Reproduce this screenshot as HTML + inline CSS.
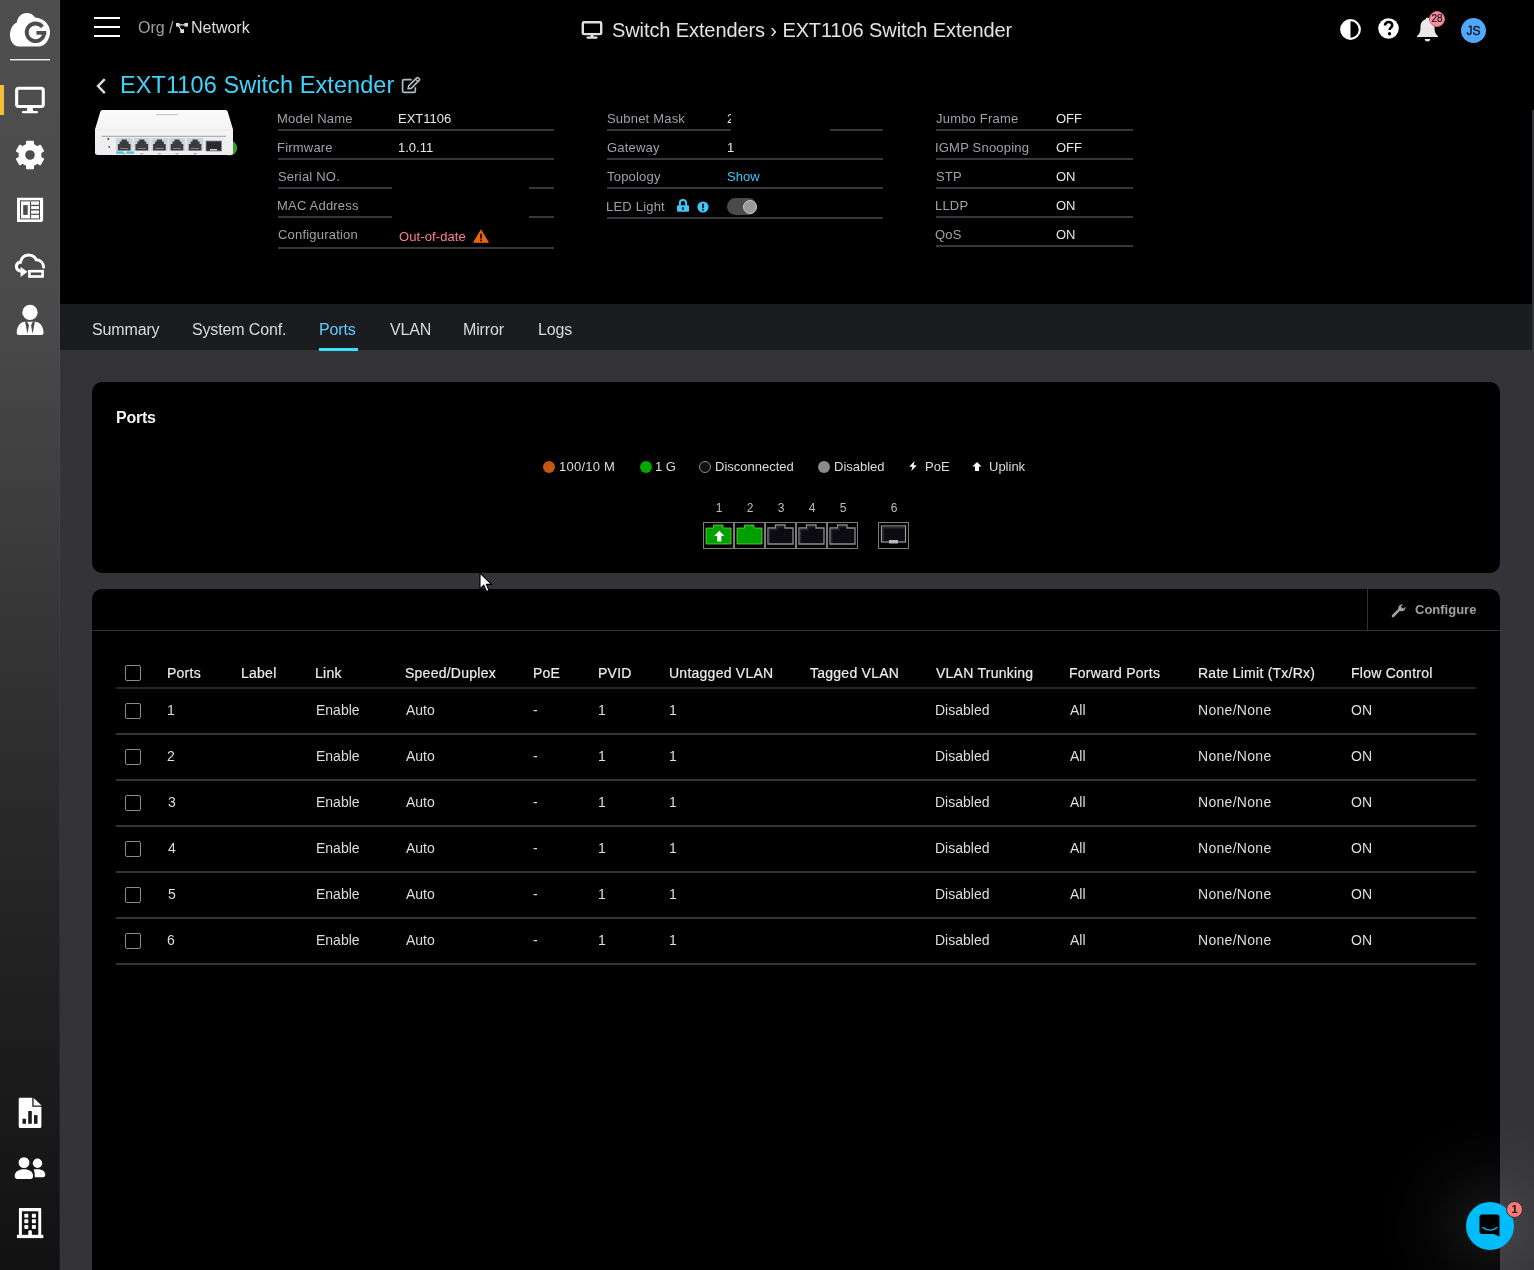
<!DOCTYPE html>
<html><head><meta charset="utf-8"><title>EXT1106 Switch Extender</title>
<style>
html,body{margin:0;padding:0;background:#000;}
body{width:1534px;height:1270px;overflow:hidden;position:relative;font-family:"Liberation Sans",sans-serif;}
.r{position:absolute;display:block;}
.t{position:absolute;line-height:1;white-space:nowrap;font-family:"Liberation Sans",sans-serif;will-change:transform;}
</style></head><body>
<div class="r" style="left:0px;top:0px;width:1534px;height:1270px;background:#000;"></div>
<div class="r" style="left:60px;top:350px;width:1474px;height:920px;background:#343438;"></div>
<div class="r" style="left:1532px;top:110px;width:2px;height:240px;background:#343438;"></div>
<div class="r" style="left:60px;top:304px;width:1472px;height:46px;background:#1b1c20;"></div>
<div class="r" style="left:0px;top:0px;width:60px;height:1270px;background:linear-gradient(180deg,#4e4e4e 0px,#4b4b4b 300px,#2a2a2a 800px,#111 1270px);"></div>
<div class="r" style="left:59px;top:0px;width:1px;height:1270px;background:rgba(255,255,255,0.04);"></div>
<svg class="r" style="left:5px;top:8px;" width="50" height="44" viewBox="0 0 50 44"><path d="M13.9 38.5 C8.5 38.5 5 33 5 27 C5 21 8 16 11.8 14.6 C12.5 8.8 16.5 4.9 21.5 4.9 C25.5 4.9 28.5 6.8 30.1 9.4 C38.5 10.2 45 16 45 24 C45 32 39.5 38.4 34.6 38.4 Z" fill="#fff"/><path d="M37.43 18.88 A8.8 8.8 0 1 0 39.29 24.76" fill="none" stroke="#4d4d4d" stroke-width="3.8"/><rect x="31.4" y="23" width="9.9" height="3.7" fill="#4d4d4d"/></svg>
<div class="r" style="left:10px;top:59px;width:40px;height:1px;background:#eee;"></div>
<div class="r" style="left:10px;top:60px;width:40px;height:1px;background:rgba(230,230,230,0.45);"></div>
<div class="r" style="left:0px;top:85px;width:4px;height:30px;background:#f5bf3a;"></div>
<svg class="r" style="left:14px;top:86px;" width="32" height="28" viewBox="0 0 32 28"><rect x="2.65" y="2.25" width="26.6" height="18.3" rx="2" fill="none" stroke="#fff" stroke-width="3.1"/><path d="M13.3 21.5 H18.7 L19.2 25.5 H12.8 Z" fill="#fff"/><rect x="7.9" y="24.9" width="16.1" height="2.4" rx="1.2" fill="#fff"/></svg>
<svg class="r" style="left:15px;top:139.85px;" width="30" height="30" viewBox="0 0 30 30"><g transform="translate(15,15)" fill="#fff"><rect x="-3.95" y="-14.3" width="7.9" height="6" rx="0.8" transform="rotate(0)"/><rect x="-3.95" y="-14.3" width="7.9" height="6" rx="0.8" transform="rotate(60)"/><rect x="-3.95" y="-14.3" width="7.9" height="6" rx="0.8" transform="rotate(120)"/><rect x="-3.95" y="-14.3" width="7.9" height="6" rx="0.8" transform="rotate(180)"/><rect x="-3.95" y="-14.3" width="7.9" height="6" rx="0.8" transform="rotate(240)"/><rect x="-3.95" y="-14.3" width="7.9" height="6" rx="0.8" transform="rotate(300)"/><circle r="11.4"/></g><circle cx="15" cy="15" r="4.8" fill="#4c4c4c"/></svg>
<svg class="r" style="left:14px;top:194px;" width="32" height="32" viewBox="0 0 32 32"><path d="M3 3.8 H29.1 V26.6 L27.6 28.1 H3 Z" fill="#fff"/><rect x="6" y="6.3" width="20" height="19.1" fill="#4b4b4b"/><rect x="7" y="7.4" width="18" height="17" fill="#fff"/><rect x="9.2" y="11.1" width="4.5" height="9.8" fill="#4b4b4b"/><rect x="16" y="7.4" width="1.1" height="17" fill="#4b4b4b"/><rect x="17.1" y="10.8" width="7.9" height="1.3" fill="#4b4b4b"/><rect x="17.1" y="15.1" width="7.9" height="1.4" fill="#4b4b4b"/><rect x="17.1" y="19.7" width="7.9" height="1.2" fill="#4b4b4b"/></svg>
<svg class="r" style="left:14px;top:252px;" width="32" height="28" viewBox="0 0 32 28"><path d="M7.2 19.3 C4.2 18.8 2.4 16.8 2.4 14.6 C2.4 12.3 4.1 10.6 6.4 10.3 C7.3 5.9 10.6 2.9 14.6 2.9 C18.3 2.9 21 4.9 22.3 7.8 C26.3 8.1 29.5 11 29.6 15.3" fill="none" stroke="#fff" stroke-width="3" stroke-linecap="round"/><path d="M6.6 15.1 L13.6 19.8 L6.6 25 Z" fill="#fff"/><rect x="15.4" y="19.2" width="13.2" height="5.3" fill="none" stroke="#fff" stroke-width="2.6"/></svg>
<svg class="r" style="left:12px;top:300px;" width="36" height="40" viewBox="0 0 36 40"><circle cx="18" cy="12.4" r="7.7" fill="#fff"/><path d="M4.7 33 C4.7 26 8.5 21.7 12.8 21.7 H23.2 C27.5 21.7 31.5 26 31.5 33 C31.5 34.2 30.7 35 29.5 35 H6.7 C5.5 35 4.7 34.2 4.7 33 Z" fill="#fff"/><path d="M13.1 21.4 H15.1 L17 25.5 L15.4 33.7 Z" fill="#4a4a4a"/><path d="M20.9 21.4 H22.9 L20.6 33.7 L19 25.5 Z" fill="#4a4a4a"/></svg>
<svg class="r" style="left:14px;top:1092px;" width="32" height="40" viewBox="0 0 32 40"><path d="M4.7 7.2 C4.7 6.3 5.3 5.7 6.2 5.7 H18.3 V14.8 H27.4 V34.4 C27.4 35.3 26.8 35.9 25.9 35.9 H6.2 C5.3 35.9 4.7 35.3 4.7 34.4 Z" fill="#fff"/><path d="M19.6 5.9 L27.6 13.6 H19.6 Z" fill="#fff"/><rect x="8.5" y="26.8" width="3.5" height="5" fill="#1c1c1c"/><rect x="14.2" y="19" width="3.6" height="12.8" fill="#1c1c1c"/><rect x="20" y="23.1" width="3.5" height="8.7" fill="#1c1c1c"/></svg>
<svg class="r" style="left:12px;top:1150px;" width="36" height="36" viewBox="0 0 36 36"><circle cx="12" cy="12.6" r="5.4" fill="#fff"/><circle cx="25.5" cy="13.3" r="4.7" fill="#fff"/><path d="M2.8 25.5 C2.8 21.5 7 19.2 12 19.2 C17 19.2 21 21.5 21 25.5 V26.5 C21 28 20 28.9 18.5 28.9 H5.3 C3.8 28.9 2.8 28 2.8 26.5 Z" fill="#fff"/><path d="M21.6 19.6 C22.8 19.3 24 19.2 25.5 19.2 C30 19.2 33.3 21.3 33.3 24.8 C33.3 26.3 32.5 27.2 31 27.2 H22.8 C22.8 24 22.5 21.3 21.6 19.6 Z" fill="#fff"/></svg>
<svg class="r" style="left:12px;top:1204px;" width="36" height="38" viewBox="0 0 36 38"><path d="M6.9 32 V5 C6.9 4.3 7.3 3.9 8 3.9 H28.1 C28.8 3.9 29.2 4.3 29.2 5 V32 H26.3 V7.2 H9.9 V32 Z" fill="#fff"/><rect x="4.9" y="30.8" width="26.4" height="3.3" fill="#fff"/><rect x="12.3" y="9.7" width="4" height="4" rx="0.8" fill="#fff"/><rect x="12.3" y="15.2" width="4" height="4" rx="0.8" fill="#fff"/><rect x="12.3" y="20.9" width="4" height="4" rx="0.8" fill="#fff"/><rect x="19.9" y="9.7" width="4" height="4" rx="0.8" fill="#fff"/><rect x="19.9" y="15.2" width="4" height="4" rx="0.8" fill="#fff"/><rect x="19.9" y="20.9" width="4" height="4" rx="0.8" fill="#fff"/><path d="M16.3 31 V27.5 C16.3 26.8 17 26.3 18.1 26.3 C19.2 26.3 19.9 26.8 19.9 27.5 V31 Z" fill="#fff"/></svg>
<div class="r" style="left:94px;top:17px;width:26px;height:2px;background:#fff;"></div>
<div class="r" style="left:94px;top:26px;width:26px;height:2px;background:#fff;"></div>
<div class="r" style="left:94px;top:35px;width:26px;height:2px;background:#fff;"></div>
<div class="t" style="left:138.00px;top:20px;font-size:16px;color:#a0a0a0;font-weight:400;">Org /</div>
<svg class="r" style="left:175px;top:22px;" width="14" height="12" viewBox="0 0 14 12"><path d="M3 2.8 L11.5 2.8 M3 3 L7 9.5" stroke="#ddd" stroke-width="1.3"/><rect x="1" y="1" width="3.6" height="3.6" fill="#ddd"/><rect x="9.4" y="1" width="3.6" height="3.6" fill="#ddd"/><rect x="5.2" y="7.2" width="3.8" height="3.8" fill="#ddd"/></svg>
<div class="t" style="left:191.00px;top:20px;font-size:16px;color:#dedede;font-weight:400;">Network</div>
<svg class="r" style="left:581px;top:19px;" width="22" height="21" viewBox="0 0 22 21"><rect x="1.8" y="3.3" width="18.4" height="11.8" rx="1.2" fill="none" stroke="#e0e0e0" stroke-width="2.4"/><rect x="9.5" y="15" width="3" height="3" fill="#e0e0e0"/><rect x="5.5" y="17.5" width="11" height="2.2" rx="1" fill="#e0e0e0"/></svg>
<div class="t" style="left:612.00px;top:20px;font-size:20px;color:#e3e3e3;font-weight:400;letter-spacing:-0.1px;">Switch Extenders › EXT1106 Switch Extender</div>
<svg class="r" style="left:1339px;top:18px;" width="23" height="23" viewBox="0 0 23 23"><circle cx="11.5" cy="11.5" r="9.3" fill="none" stroke="#fff" stroke-width="2.2"/><path d="M11.5 2.2 A9.3 9.3 0 0 0 11.5 20.8 Z" fill="#fff"/></svg>
<svg class="r" style="left:1377px;top:17px;" width="23" height="23" viewBox="0 0 23 23"><circle cx="11.5" cy="11.5" r="10.3" fill="#fff"/><path d="M8 8.6 C8 6.2 9.6 5 11.6 5 C13.8 5 15.2 6.3 15.2 8.2 C15.2 10.4 12.6 10.8 12.6 13" fill="none" stroke="#000" stroke-width="2.6"/><circle cx="12.5" cy="16.8" r="1.7" fill="#000"/></svg>
<svg class="r" style="left:1415px;top:16px;" width="25" height="27" viewBox="0 0 25 27"><path d="M12.5 1.5 C13.6 1.5 14.2 2.3 14.2 3.2 C18 4.2 19.5 7.5 19.5 11 C19.5 16 20.5 18 23 20 V21 H2 V20 C4.5 18 5.5 16 5.5 11 C5.5 7.5 7 4.2 10.8 3.2 C10.8 2.3 11.4 1.5 12.5 1.5 Z" fill="#e8e8e8"/><path d="M9.6 23 H15.4 C15 24.7 14 25.5 12.5 25.5 C11 25.5 10 24.7 9.6 23 Z" fill="#e8e8e8"/></svg>
<div class="r" style="left:1429px;top:10.5px;width:14px;height:14px;border:1px solid #d8606f;border-radius:50%;background:#f490a0;color:#111;font-size:10px;line-height:14px;text-align:center;will-change:transform;-webkit-text-stroke:0.2px #111;font-family:'Liberation Sans',sans-serif">28</div>
<div class="r" style="left:1461px;top:18px;width:25px;height:25px;border-radius:50%;background:#4fa8fb;color:#111;font-size:12px;font-weight:400;line-height:26px;text-align:center;will-change:transform;-webkit-text-stroke:0.3px #111;font-family:'Liberation Sans',sans-serif">JS</div>
<svg class="r" style="left:94px;top:77px;" width="14" height="18" viewBox="0 0 14 18"><path d="M10.8 2.1 L4 9.1 L10.8 16.1" fill="none" stroke="#dcdcdc" stroke-width="2.4"/></svg>
<div class="t" style="left:120.00px;top:74px;font-size:23.5px;color:#3fd3fc;font-weight:400;letter-spacing:0.08px;">EXT1106 Switch Extender</div>
<svg class="r" style="left:401px;top:76px;" width="21" height="19" viewBox="0 0 21 19"><path d="M10.6 3.6 H3.1 C2.2 3.6 1.6 4.2 1.6 5.1 V14.9 C1.6 15.8 2.2 16.4 3.1 16.4 H12.8 C13.7 16.4 14.3 15.8 14.3 14.9 V11.2" fill="none" stroke="#b2bac2" stroke-width="1.7"/><path d="M7.1 12.8 L7.7 9.9 L15.7 1.9 C16.2 1.4 16.9 1.4 17.4 1.9 L18.2 2.7 C18.7 3.2 18.7 3.9 18.2 4.4 L10.2 12.4 Z" fill="none" stroke="#b2bac2" stroke-width="1.6" stroke-linejoin="round"/><path d="M14.5 3.2 L16.9 5.6" stroke="#b2bac2" stroke-width="1.4"/></svg>
<svg class="r" style="left:90px;top:105px;" width="150" height="55" viewBox="0 0 150 55"><defs><linearGradient id="dg" x1="0" y1="0" x2="0" y2="1"><stop offset="0" stop-color="#fafafa"/><stop offset="1" stop-color="#ececec"/></linearGradient></defs><circle cx="139.6" cy="43" r="7.6" fill="#3b9e2a"/><path d="M13.5 5 H135 C136.5 5 137.3 5.6 137.8 7 L143 24.5 V47.5 C143 49.3 142 50 140.5 50 H7.5 C6 50 5 49.3 5 47.5 V24.5 L10.2 7 C10.7 5.6 11.5 5 13.5 5 Z" fill="url(#dg)"/><path d="M5 25 H143" stroke="#e2e2e2" stroke-width="0.6"/><rect x="11.7" y="30.8" width="124.2" height="19" fill="#eceef2"/><rect x="11.7" y="30.8" width="124.2" height="0.9" fill="#9a9a9a"/><rect x="26.0" y="33" width="16.4" height="13" fill="#cfd3de"/><path d="M27.9 45.5 V39 H29.7 V36.5 H31.6 V34.5 H36.8 V36.5 H38.7 V39 H40.5 V45.5 Z" fill="#3b3c42"/><rect x="30.2" y="43" width="8" height="1" fill="#b0a060" opacity="0.7"/><rect x="32.7" y="48" width="3" height="1.2" fill="#aaa"/><rect x="43.6" y="33" width="16.4" height="13" fill="#cfd3de"/><path d="M45.5 45.5 V39 H47.3 V36.5 H49.2 V34.5 H54.4 V36.5 H56.3 V39 H58.1 V45.5 Z" fill="#3b3c42"/><rect x="47.8" y="43" width="8" height="1" fill="#b0a060" opacity="0.7"/><rect x="50.3" y="48" width="3" height="1.2" fill="#aaa"/><rect x="61.2" y="33" width="16.4" height="13" fill="#cfd3de"/><path d="M63.1 45.5 V39 H64.9 V36.5 H66.8 V34.5 H72.0 V36.5 H73.9 V39 H75.7 V45.5 Z" fill="#3b3c42"/><rect x="65.4" y="43" width="8" height="1" fill="#b0a060" opacity="0.7"/><rect x="67.9" y="48" width="3" height="1.2" fill="#aaa"/><rect x="78.8" y="33" width="16.4" height="13" fill="#cfd3de"/><path d="M80.7 45.5 V39 H82.5 V36.5 H84.4 V34.5 H89.6 V36.5 H91.5 V39 H93.3 V45.5 Z" fill="#3b3c42"/><rect x="83.0" y="43" width="8" height="1" fill="#b0a060" opacity="0.7"/><rect x="85.5" y="48" width="3" height="1.2" fill="#aaa"/><rect x="96.9" y="33" width="16.4" height="13" fill="#cfd3de"/><path d="M98.8 45.5 V39 H100.6 V36.5 H102.5 V34.5 H107.7 V36.5 H109.6 V39 H111.4 V45.5 Z" fill="#3b3c42"/><rect x="101.1" y="43" width="8" height="1" fill="#b0a060" opacity="0.7"/><rect x="103.6" y="48" width="3" height="1.2" fill="#aaa"/><rect x="26.2" y="46.4" width="7.5" height="2.4" fill="#4cc4de"/><rect x="36.5" y="46.4" width="7.5" height="2.4" fill="#4cc4de"/><rect x="116" y="36" width="15.5" height="10" fill="#2a2b2e" stroke="#888" stroke-width="0.8"/><rect x="120" y="44" width="7" height="1.5" fill="#ccc"/><circle cx="18.3" cy="34" r="1.1" fill="#555"/><circle cx="19.2" cy="42" r="0.9" fill="#555"/><rect x="66" y="9" width="22" height="1.2" fill="#c8c8c8"/></svg>
<div class="t" style="left:277.00px;top:112px;font-size:13px;color:#a0a0a8;font-weight:400;letter-spacing:0.2px;">Model Name</div>
<div class="t" style="left:398.00px;top:112px;font-size:13px;color:#e8e8e8;font-weight:400;">EXT1106</div>
<div class="t" style="left:277.00px;top:141px;font-size:13px;color:#a0a0a8;font-weight:400;letter-spacing:0.2px;">Firmware</div>
<div class="t" style="left:398.00px;top:141px;font-size:13px;color:#e8e8e8;font-weight:400;">1.0.11</div>
<div class="t" style="left:278.00px;top:170px;font-size:13px;color:#a0a0a8;font-weight:400;letter-spacing:0.2px;">Serial NO.</div>
<div class="t" style="left:277.00px;top:199px;font-size:13px;color:#a0a0a8;font-weight:400;letter-spacing:0.2px;">MAC Address</div>
<div class="t" style="left:278.00px;top:228px;font-size:13px;color:#a0a0a8;font-weight:400;letter-spacing:0.2px;">Configuration</div>
<div class="t" style="left:399.00px;top:230px;font-size:13px;color:#ff7d92;font-weight:400;letter-spacing:0.1px;">Out-of-date</div>
<svg class="r" style="left:473px;top:229px;" width="16" height="14" viewBox="0 0 16 14"><path d="M8 1.2 L15.2 13.2 H0.8 Z" fill="#e8650e" stroke="#e8650e" stroke-width="1.2" stroke-linejoin="round"/><rect x="7.15" y="4.8" width="1.7" height="4.9" fill="#000"/><rect x="7.15" y="10.6" width="1.7" height="1.7" fill="#000"/></svg>
<div class="r" style="left:278px;top:129px;width:276px;height:2px;background:#37363c;"></div>
<div class="r" style="left:278px;top:158px;width:276px;height:2px;background:#37363c;"></div>
<div class="r" style="left:278px;top:187px;width:114px;height:2px;background:#37363c;"></div>
<div class="r" style="left:529px;top:187px;width:25px;height:2px;background:#37363c;"></div>
<div class="r" style="left:278px;top:216px;width:114px;height:2px;background:#37363c;"></div>
<div class="r" style="left:529px;top:216px;width:25px;height:2px;background:#37363c;"></div>
<div class="r" style="left:278px;top:247px;width:276px;height:2px;background:#37363c;"></div>
<div class="t" style="left:607.00px;top:112px;font-size:13px;color:#a0a0a8;font-weight:400;letter-spacing:0.2px;">Subnet Mask</div>
<div class="t" style="left:607.00px;top:141px;font-size:13px;color:#a0a0a8;font-weight:400;letter-spacing:0.2px;">Gateway</div>
<div class="t" style="left:607.00px;top:170px;font-size:13px;color:#a0a0a8;font-weight:400;letter-spacing:0.2px;">Topology</div>
<div class="t" style="left:606.00px;top:200px;font-size:13px;color:#a0a0a8;font-weight:400;letter-spacing:0.2px;">LED Light</div>
<div class="r" style="left:727px;top:105px;width:4px;height:22px;overflow:hidden"><div class="t" style="left:0;top:7.00px;font-size:13px;color:#e8e8e8">2</div></div>
<div class="t" style="left:727.00px;top:141px;font-size:13px;color:#e8e8e8;font-weight:400;">1</div>
<div class="t" style="left:727.00px;top:170px;font-size:13px;color:#3fc4fb;font-weight:400;">Show</div>
<svg class="r" style="left:676px;top:198px;" width="14" height="15" viewBox="0 0 14 15"><rect x="1" y="7.3" width="12" height="6.5" rx="1" fill="#3fc6fb"/><path d="M3.9 7.8 V5 C3.9 3 5.2 1.9 7 1.9 C8.8 1.9 10.1 3 10.1 5 V7.8" fill="none" stroke="#3fc6fb" stroke-width="2"/><rect x="6.25" y="9.2" width="1.5" height="2.8" fill="#000"/></svg>
<svg class="r" style="left:696.5px;top:200.7px;" width="12" height="12" viewBox="0 0 12 12"><circle cx="6" cy="6" r="5.6" fill="#3fc6fb"/><rect x="5.2" y="2.6" width="1.6" height="4.6" fill="#000"/><rect x="5.2" y="8" width="1.6" height="1.6" fill="#000"/></svg>
<div class="r" style="left:727px;top:198px;width:30px;height:17px;border-radius:9px;background:#4a4a4a"></div>
<div class="r" style="left:743px;top:199.5px;width:14px;height:14px;border-radius:50%;background:#9a9a9a;border:1px solid #c8c8c8;box-sizing:border-box"></div>
<div class="r" style="left:607px;top:129px;width:124px;height:2px;background:#37363c;"></div>
<div class="r" style="left:830px;top:129px;width:53px;height:2px;background:#37363c;"></div>
<div class="r" style="left:607px;top:158px;width:276px;height:2px;background:#37363c;"></div>
<div class="r" style="left:607px;top:187px;width:276px;height:2px;background:#37363c;"></div>
<div class="r" style="left:607px;top:217px;width:276px;height:2px;background:#37363c;"></div>
<div class="t" style="left:936.00px;top:112px;font-size:13px;color:#a0a0a8;font-weight:400;letter-spacing:0.2px;">Jumbo Frame</div>
<div class="t" style="left:1056.00px;top:112px;font-size:13px;color:#e8e8e8;font-weight:400;">OFF</div>
<div class="t" style="left:935.00px;top:141px;font-size:13px;color:#a0a0a8;font-weight:400;letter-spacing:0.2px;">IGMP Snooping</div>
<div class="t" style="left:1056.00px;top:141px;font-size:13px;color:#e8e8e8;font-weight:400;">OFF</div>
<div class="t" style="left:936.00px;top:170px;font-size:13px;color:#a0a0a8;font-weight:400;letter-spacing:0.2px;">STP</div>
<div class="t" style="left:1056.00px;top:170px;font-size:13px;color:#e8e8e8;font-weight:400;">ON</div>
<div class="t" style="left:935.00px;top:199px;font-size:13px;color:#a0a0a8;font-weight:400;letter-spacing:0.2px;">LLDP</div>
<div class="t" style="left:1056.00px;top:199px;font-size:13px;color:#e8e8e8;font-weight:400;">ON</div>
<div class="t" style="left:935.00px;top:228px;font-size:13px;color:#a0a0a8;font-weight:400;letter-spacing:0.2px;">QoS</div>
<div class="t" style="left:1056.00px;top:228px;font-size:13px;color:#e8e8e8;font-weight:400;">ON</div>
<div class="r" style="left:936px;top:129px;width:197px;height:2px;background:#37363c;"></div>
<div class="r" style="left:936px;top:158px;width:197px;height:2px;background:#37363c;"></div>
<div class="r" style="left:936px;top:187px;width:197px;height:2px;background:#37363c;"></div>
<div class="r" style="left:936px;top:216px;width:197px;height:2px;background:#37363c;"></div>
<div class="r" style="left:936px;top:245px;width:197px;height:2px;background:#37363c;"></div>
<div class="t" style="left:92.00px;top:322px;font-size:16px;color:#dadada;font-weight:400;letter-spacing:-0.15px;">Summary</div>
<div class="t" style="left:192.00px;top:322px;font-size:16px;color:#dadada;font-weight:400;letter-spacing:-0.15px;">System Conf.</div>
<div class="t" style="left:319.00px;top:322px;font-size:16px;color:#5ccfff;font-weight:400;letter-spacing:-0.15px;">Ports</div>
<div class="t" style="left:390.00px;top:322px;font-size:16px;color:#dadada;font-weight:400;letter-spacing:-0.15px;">VLAN</div>
<div class="t" style="left:463.00px;top:322px;font-size:16px;color:#dadada;font-weight:400;letter-spacing:-0.15px;">Mirror</div>
<div class="t" style="left:538.00px;top:322px;font-size:16px;color:#dadada;font-weight:400;letter-spacing:-0.15px;">Logs</div>
<div class="r" style="left:319px;top:348px;width:39px;height:3px;background:#3ae0ff;"></div>
<div class="r" style="left:92px;top:382px;width:1408px;height:191px;background:#000;border-radius:10px;"></div>
<div class="t" style="left:116.00px;top:410px;font-size:16px;color:#f2f2f2;font-weight:700;letter-spacing:-0.25px;">Ports</div>
<div class="r" style="left:543.0px;top:461.0px;width:12px;height:12px;border-radius:50%;background:#c2570f;box-sizing:border-box;"></div>
<div class="t" style="left:559.00px;top:460px;font-size:13px;color:#dcdcdc;font-weight:400;letter-spacing:0.25px;">100/10 M</div>
<div class="r" style="left:640.0px;top:461.0px;width:12px;height:12px;border-radius:50%;background:#00a800;box-sizing:border-box;"></div>
<div class="t" style="left:655.00px;top:460px;font-size:13px;color:#dcdcdc;font-weight:400;">1 G</div>
<div class="r" style="left:699.0px;top:461.0px;width:12px;height:12px;border-radius:50%;background:#111;box-sizing:border-box;border:1px solid #8a8a8a;"></div>
<div class="t" style="left:715.00px;top:460px;font-size:13px;color:#dcdcdc;font-weight:400;">Disconnected</div>
<div class="r" style="left:818.0px;top:461.0px;width:12px;height:12px;border-radius:50%;background:#8a8a8a;box-sizing:border-box;"></div>
<div class="t" style="left:834.00px;top:460px;font-size:13px;color:#dcdcdc;font-weight:400;">Disabled</div>
<svg class="r" style="left:908px;top:460px;" width="10" height="12" viewBox="0 0 10 12"><path d="M6.6 1 L1.2 6.8 H4.4 L3.3 11 L8.8 5.2 H5.6 Z" fill="#fff"/></svg>
<div class="t" style="left:925.00px;top:460px;font-size:13px;color:#dcdcdc;font-weight:400;">PoE</div>
<svg class="r" style="left:971px;top:460px;" width="12" height="12" viewBox="0 0 12 12"><path d="M6 2 L10.6 6.6 H8 V11 H4 V6.6 H1.4 Z" fill="#fff"/></svg>
<div class="t" style="left:989.00px;top:460px;font-size:13px;color:#dcdcdc;font-weight:400;">Uplink</div>
<div class="t" style="left:708.7px;width:20px;text-align:center;top:502px;font-size:12px;color:#bdbdbd">1</div>
<div class="t" style="left:739.6px;width:20px;text-align:center;top:502px;font-size:12px;color:#bdbdbd">2</div>
<div class="t" style="left:770.5px;width:20px;text-align:center;top:502px;font-size:12px;color:#bdbdbd">3</div>
<div class="t" style="left:801.5px;width:20px;text-align:center;top:502px;font-size:12px;color:#bdbdbd">4</div>
<div class="t" style="left:832.5px;width:20px;text-align:center;top:502px;font-size:12px;color:#bdbdbd">5</div>
<div class="t" style="left:883.6px;width:20px;text-align:center;top:502px;font-size:12px;color:#bdbdbd">6</div>
<svg class="r" style="left:703px;top:522px;" width="31" height="27" viewBox="0 0 31 27"><rect x="0.5" y="0.5" width="30" height="26" fill="none" stroke="#7c7c7c" stroke-width="1"/><path d="M3 22 V6 H10.5 V3 H20 V6 H28 V22 Z" fill="#00a000" stroke="#6ed04a" stroke-width="0.8"/><path d="M16.3 8.8 L21.5 14 H18.4 V19.6 H14.2 V14 H11.1 Z" fill="#fff"/></svg>
<svg class="r" style="left:734px;top:522px;" width="31" height="27" viewBox="0 0 31 27"><rect x="0.5" y="0.5" width="30" height="26" fill="none" stroke="#7c7c7c" stroke-width="1"/><path d="M3 22 V6 H10.5 V3 H20 V6 H28 V22 Z" fill="#00a000" stroke="#6ed04a" stroke-width="0.8"/></svg>
<svg class="r" style="left:765px;top:522px;" width="31" height="27" viewBox="0 0 31 27"><rect x="0.5" y="0.5" width="30" height="26" fill="none" stroke="#7c7c7c" stroke-width="1"/><path d="M3 22 V6 H10.5 V3 H20 V6 H28 V22 Z" fill="#0d0b12" stroke="#8c8c8c" stroke-width="1.3"/><path d="M4.6 21 V7.5 H12 V4.6 H18.5" fill="none" stroke="#26252b" stroke-width="1.6"/></svg>
<svg class="r" style="left:796px;top:522px;" width="31" height="27" viewBox="0 0 31 27"><rect x="0.5" y="0.5" width="30" height="26" fill="none" stroke="#7c7c7c" stroke-width="1"/><path d="M3 22 V6 H10.5 V3 H20 V6 H28 V22 Z" fill="#0d0b12" stroke="#8c8c8c" stroke-width="1.3"/><path d="M4.6 21 V7.5 H12 V4.6 H18.5" fill="none" stroke="#26252b" stroke-width="1.6"/></svg>
<svg class="r" style="left:827px;top:522px;" width="31" height="27" viewBox="0 0 31 27"><rect x="0.5" y="0.5" width="30" height="26" fill="none" stroke="#7c7c7c" stroke-width="1"/><path d="M3 22 V6 H10.5 V3 H20 V6 H28 V22 Z" fill="#0d0b12" stroke="#8c8c8c" stroke-width="1.3"/><path d="M4.6 21 V7.5 H12 V4.6 H18.5" fill="none" stroke="#26252b" stroke-width="1.6"/></svg>
<svg class="r" style="left:878px;top:522px;" width="31" height="27" viewBox="0 0 31 27"><rect x="0.5" y="0.5" width="30" height="26" fill="none" stroke="#7c7c7c"/><rect x="3.5" y="4" width="24" height="16" fill="#0d0b12" stroke="#9a9a9a" stroke-width="1.2"/><path d="M5 18.5 V5.5 H26" fill="none" stroke="#2a2a2e" stroke-width="1.8"/><rect x="11" y="18" width="9" height="3.5" fill="#b8b8b8"/></svg>
<div class="r" style="left:92px;top:589px;width:1408px;height:700px;background:#000;border-radius:10px;"></div>
<div class="r" style="left:92px;top:630px;width:1408px;height:1px;background:#303035;"></div>
<div class="r" style="left:1367px;top:589px;width:1px;height:41px;background:#303035;"></div>
<svg class="r" style="left:1391px;top:603px;" width="15" height="15" viewBox="0 0 15 15"><path d="M2 13 L8.5 6.5" stroke="#a0a0a0" stroke-width="2.6" stroke-linecap="round"/><path d="M7.5 7 C6.5 4 8.5 1 12 1.2 L10 3.4 L11 5 L12.8 5.5 L14.5 3.5 C15 7 12 9 9 8 Z" fill="#a0a0a0"/></svg>
<div class="t" style="left:1415.00px;top:603px;font-size:13px;color:#a0a0a0;font-weight:700;">Configure</div>
<div class="t" style="left:167.00px;top:666px;font-size:14px;color:#ececec;font-weight:400;letter-spacing:0.25px;-webkit-text-stroke:0.2px #ececec;">Ports</div>
<div class="t" style="left:241.00px;top:666px;font-size:14px;color:#ececec;font-weight:400;letter-spacing:0.25px;-webkit-text-stroke:0.2px #ececec;">Label</div>
<div class="t" style="left:315.00px;top:666px;font-size:14px;color:#ececec;font-weight:400;letter-spacing:0.25px;-webkit-text-stroke:0.2px #ececec;">Link</div>
<div class="t" style="left:405.00px;top:666px;font-size:14px;color:#ececec;font-weight:400;letter-spacing:0.25px;-webkit-text-stroke:0.2px #ececec;">Speed/Duplex</div>
<div class="t" style="left:533.00px;top:666px;font-size:14px;color:#ececec;font-weight:400;letter-spacing:0.25px;-webkit-text-stroke:0.2px #ececec;">PoE</div>
<div class="t" style="left:598.00px;top:666px;font-size:14px;color:#ececec;font-weight:400;letter-spacing:0.25px;-webkit-text-stroke:0.2px #ececec;">PVID</div>
<div class="t" style="left:669.00px;top:666px;font-size:14px;color:#ececec;font-weight:400;letter-spacing:0.25px;-webkit-text-stroke:0.2px #ececec;">Untagged VLAN</div>
<div class="t" style="left:810.00px;top:666px;font-size:14px;color:#ececec;font-weight:400;letter-spacing:0.25px;-webkit-text-stroke:0.2px #ececec;">Tagged VLAN</div>
<div class="t" style="left:936.00px;top:666px;font-size:14px;color:#ececec;font-weight:400;letter-spacing:0.25px;-webkit-text-stroke:0.2px #ececec;">VLAN Trunking</div>
<div class="t" style="left:1069.00px;top:666px;font-size:14px;color:#ececec;font-weight:400;letter-spacing:0.25px;-webkit-text-stroke:0.2px #ececec;">Forward Ports</div>
<div class="t" style="left:1198.00px;top:666px;font-size:14px;color:#ececec;font-weight:400;letter-spacing:0.25px;-webkit-text-stroke:0.2px #ececec;">Rate Limit (Tx/Rx)</div>
<div class="t" style="left:1351.00px;top:666px;font-size:14px;color:#ececec;font-weight:400;letter-spacing:0.25px;-webkit-text-stroke:0.2px #ececec;">Flow Control</div>
<div class="r" style="left:125px;top:665px;width:16px;height:16px;border:1.5px solid #8a8a8a;border-radius:2px;box-sizing:border-box"></div>
<div class="r" style="left:116px;top:687px;width:1360px;height:2px;background:#25252a;"></div>
<div class="r" style="left:125px;top:703px;width:16px;height:16px;border:1.5px solid #8a8a8a;border-radius:2px;box-sizing:border-box"></div>
<div class="t" style="left:167.00px;top:703px;font-size:14px;color:#dedede;font-weight:400;">1</div>
<div class="t" style="left:316.00px;top:703px;font-size:14px;color:#dedede;font-weight:400;">Enable</div>
<div class="t" style="left:406.00px;top:703px;font-size:14px;color:#dedede;font-weight:400;">Auto</div>
<div class="t" style="left:533.00px;top:703px;font-size:14px;color:#dedede;font-weight:400;">-</div>
<div class="t" style="left:598.00px;top:703px;font-size:14px;color:#dedede;font-weight:400;">1</div>
<div class="t" style="left:669.00px;top:703px;font-size:14px;color:#dedede;font-weight:400;">1</div>
<div class="t" style="left:935.00px;top:703px;font-size:14px;color:#dedede;font-weight:400;">Disabled</div>
<div class="t" style="left:1070.00px;top:703px;font-size:14px;color:#dedede;font-weight:400;">All</div>
<div class="t" style="left:1198.00px;top:703px;font-size:14px;color:#dedede;font-weight:400;letter-spacing:0.3px;">None/None</div>
<div class="t" style="left:1351.00px;top:703px;font-size:14px;color:#dedede;font-weight:400;">ON</div>
<div class="r" style="left:116px;top:733px;width:1360px;height:2px;background:#333338;"></div>
<div class="r" style="left:125px;top:749px;width:16px;height:16px;border:1.5px solid #8a8a8a;border-radius:2px;box-sizing:border-box"></div>
<div class="t" style="left:167.00px;top:749px;font-size:14px;color:#dedede;font-weight:400;">2</div>
<div class="t" style="left:316.00px;top:749px;font-size:14px;color:#dedede;font-weight:400;">Enable</div>
<div class="t" style="left:406.00px;top:749px;font-size:14px;color:#dedede;font-weight:400;">Auto</div>
<div class="t" style="left:533.00px;top:749px;font-size:14px;color:#dedede;font-weight:400;">-</div>
<div class="t" style="left:598.00px;top:749px;font-size:14px;color:#dedede;font-weight:400;">1</div>
<div class="t" style="left:669.00px;top:749px;font-size:14px;color:#dedede;font-weight:400;">1</div>
<div class="t" style="left:935.00px;top:749px;font-size:14px;color:#dedede;font-weight:400;">Disabled</div>
<div class="t" style="left:1070.00px;top:749px;font-size:14px;color:#dedede;font-weight:400;">All</div>
<div class="t" style="left:1198.00px;top:749px;font-size:14px;color:#dedede;font-weight:400;letter-spacing:0.3px;">None/None</div>
<div class="t" style="left:1351.00px;top:749px;font-size:14px;color:#dedede;font-weight:400;">ON</div>
<div class="r" style="left:116px;top:779px;width:1360px;height:2px;background:#333338;"></div>
<div class="r" style="left:125px;top:795px;width:16px;height:16px;border:1.5px solid #8a8a8a;border-radius:2px;box-sizing:border-box"></div>
<div class="t" style="left:168.00px;top:795px;font-size:14px;color:#dedede;font-weight:400;">3</div>
<div class="t" style="left:316.00px;top:795px;font-size:14px;color:#dedede;font-weight:400;">Enable</div>
<div class="t" style="left:406.00px;top:795px;font-size:14px;color:#dedede;font-weight:400;">Auto</div>
<div class="t" style="left:533.00px;top:795px;font-size:14px;color:#dedede;font-weight:400;">-</div>
<div class="t" style="left:598.00px;top:795px;font-size:14px;color:#dedede;font-weight:400;">1</div>
<div class="t" style="left:669.00px;top:795px;font-size:14px;color:#dedede;font-weight:400;">1</div>
<div class="t" style="left:935.00px;top:795px;font-size:14px;color:#dedede;font-weight:400;">Disabled</div>
<div class="t" style="left:1070.00px;top:795px;font-size:14px;color:#dedede;font-weight:400;">All</div>
<div class="t" style="left:1198.00px;top:795px;font-size:14px;color:#dedede;font-weight:400;letter-spacing:0.3px;">None/None</div>
<div class="t" style="left:1351.00px;top:795px;font-size:14px;color:#dedede;font-weight:400;">ON</div>
<div class="r" style="left:116px;top:825px;width:1360px;height:2px;background:#333338;"></div>
<div class="r" style="left:125px;top:841px;width:16px;height:16px;border:1.5px solid #8a8a8a;border-radius:2px;box-sizing:border-box"></div>
<div class="t" style="left:168.00px;top:841px;font-size:14px;color:#dedede;font-weight:400;">4</div>
<div class="t" style="left:316.00px;top:841px;font-size:14px;color:#dedede;font-weight:400;">Enable</div>
<div class="t" style="left:406.00px;top:841px;font-size:14px;color:#dedede;font-weight:400;">Auto</div>
<div class="t" style="left:533.00px;top:841px;font-size:14px;color:#dedede;font-weight:400;">-</div>
<div class="t" style="left:598.00px;top:841px;font-size:14px;color:#dedede;font-weight:400;">1</div>
<div class="t" style="left:669.00px;top:841px;font-size:14px;color:#dedede;font-weight:400;">1</div>
<div class="t" style="left:935.00px;top:841px;font-size:14px;color:#dedede;font-weight:400;">Disabled</div>
<div class="t" style="left:1070.00px;top:841px;font-size:14px;color:#dedede;font-weight:400;">All</div>
<div class="t" style="left:1198.00px;top:841px;font-size:14px;color:#dedede;font-weight:400;letter-spacing:0.3px;">None/None</div>
<div class="t" style="left:1351.00px;top:841px;font-size:14px;color:#dedede;font-weight:400;">ON</div>
<div class="r" style="left:116px;top:871px;width:1360px;height:2px;background:#333338;"></div>
<div class="r" style="left:125px;top:887px;width:16px;height:16px;border:1.5px solid #8a8a8a;border-radius:2px;box-sizing:border-box"></div>
<div class="t" style="left:168.00px;top:887px;font-size:14px;color:#dedede;font-weight:400;">5</div>
<div class="t" style="left:316.00px;top:887px;font-size:14px;color:#dedede;font-weight:400;">Enable</div>
<div class="t" style="left:406.00px;top:887px;font-size:14px;color:#dedede;font-weight:400;">Auto</div>
<div class="t" style="left:533.00px;top:887px;font-size:14px;color:#dedede;font-weight:400;">-</div>
<div class="t" style="left:598.00px;top:887px;font-size:14px;color:#dedede;font-weight:400;">1</div>
<div class="t" style="left:669.00px;top:887px;font-size:14px;color:#dedede;font-weight:400;">1</div>
<div class="t" style="left:935.00px;top:887px;font-size:14px;color:#dedede;font-weight:400;">Disabled</div>
<div class="t" style="left:1070.00px;top:887px;font-size:14px;color:#dedede;font-weight:400;">All</div>
<div class="t" style="left:1198.00px;top:887px;font-size:14px;color:#dedede;font-weight:400;letter-spacing:0.3px;">None/None</div>
<div class="t" style="left:1351.00px;top:887px;font-size:14px;color:#dedede;font-weight:400;">ON</div>
<div class="r" style="left:116px;top:917px;width:1360px;height:2px;background:#333338;"></div>
<div class="r" style="left:125px;top:933px;width:16px;height:16px;border:1.5px solid #8a8a8a;border-radius:2px;box-sizing:border-box"></div>
<div class="t" style="left:167.00px;top:933px;font-size:14px;color:#dedede;font-weight:400;">6</div>
<div class="t" style="left:316.00px;top:933px;font-size:14px;color:#dedede;font-weight:400;">Enable</div>
<div class="t" style="left:406.00px;top:933px;font-size:14px;color:#dedede;font-weight:400;">Auto</div>
<div class="t" style="left:533.00px;top:933px;font-size:14px;color:#dedede;font-weight:400;">-</div>
<div class="t" style="left:598.00px;top:933px;font-size:14px;color:#dedede;font-weight:400;">1</div>
<div class="t" style="left:669.00px;top:933px;font-size:14px;color:#dedede;font-weight:400;">1</div>
<div class="t" style="left:935.00px;top:933px;font-size:14px;color:#dedede;font-weight:400;">Disabled</div>
<div class="t" style="left:1070.00px;top:933px;font-size:14px;color:#dedede;font-weight:400;">All</div>
<div class="t" style="left:1198.00px;top:933px;font-size:14px;color:#dedede;font-weight:400;letter-spacing:0.3px;">None/None</div>
<div class="t" style="left:1351.00px;top:933px;font-size:14px;color:#dedede;font-weight:400;">ON</div>
<div class="r" style="left:116px;top:963px;width:1360px;height:2px;background:#333338;"></div>
<div class="r" style="left:1370px;top:1106px;width:240px;height:240px;border-radius:50%;background:radial-gradient(circle at center, rgba(255,255,255,0.10) 0px, rgba(255,255,255,0.06) 30px, rgba(255,255,255,0.025) 60px, rgba(255,255,255,0) 110px)"></div>
<div class="r" style="left:1466px;top:1202px;width:48px;height:48px;border-radius:50%;background:#00bcfa;"></div>
<svg class="r" style="left:1478px;top:1213px;" width="24" height="26" viewBox="0 0 24 26"><path d="M4 1.5 H19 C20.5 1.5 21.5 2.5 21.5 4 V23.5 L15.5 21 H4 C2.5 21 1.5 20 1.5 18.5 V4 C1.5 2.5 2.5 1.5 4 1.5 Z" fill="#000"/><path d="M4.8 14.5 C9 18 15 18 19 14.5" fill="none" stroke="#00bcfa" stroke-width="1.4" stroke-linecap="round"/></svg>
<div class="r" style="left:1506px;top:1201px;width:15px;height:15px;border:1.5px solid #2b2b2b;border-radius:50%;background:#f87878;color:#111;font-size:11px;font-weight:700;line-height:15px;text-align:center;will-change:transform;font-family:'Liberation Sans',sans-serif">1</div>
<svg class="r" style="left:479px;top:572px;" width="14" height="21" viewBox="0 0 14 21"><path d="M1 1 V17 L4.8 13.3 L7.5 19.5 L10 18.4 L7.4 12.4 H12.5 Z" fill="#fff" stroke="#000" stroke-width="1.1" stroke-linejoin="miter"/></svg>
</body></html>
